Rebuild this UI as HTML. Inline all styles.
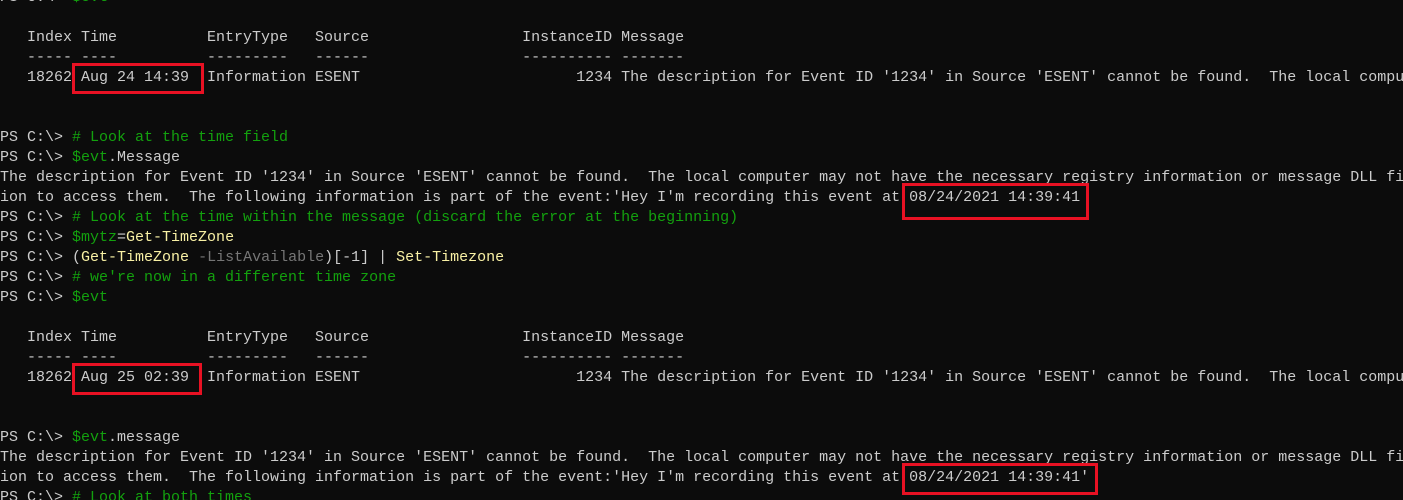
<!DOCTYPE html>
<html><head><style>
html,body{margin:0;padding:0;background:#0c0c0c;width:1403px;height:500px;overflow:hidden;position:relative}
pre{margin:0;position:absolute;left:0;top:-12px;width:1403px;overflow:hidden;font-family:"Liberation Mono",monospace;font-size:15px;line-height:20px;color:#cccccc;white-space:pre}
.g{color:#13a10e}.y{color:#f9f1a5}.d{color:#767676}
.b{position:absolute;border:3px solid #e81123;box-sizing:border-box}
</style></head><body>
<pre>PS C:\&gt; <span class="g">$evt</span>

   Index Time          EntryType   Source                 InstanceID Message
   ----- ----          ---------   ------                 ---------- -------
   18262 Aug 24 14:39  Information ESENT                        1234 The description for Event ID '1234' in Source 'ESENT' cannot be found.  The local compu


PS C:\&gt; <span class="g"># Look at the time field</span>
PS C:\&gt; <span class="g">$evt</span>.Message
The description for Event ID '1234' in Source 'ESENT' cannot be found.  The local computer may not have the necessary registry information or message DLL fi
ion to access them.  The following information is part of the event:'Hey I'm recording this event at 08/24/2021 14:39:41
PS C:\&gt; <span class="g"># Look at the time within the message (discard the error at the beginning)</span>
PS C:\&gt; <span class="g">$mytz</span>=<span class="y">Get-TimeZone</span>
PS C:\&gt; (<span class="y">Get-TimeZone</span> <span class="d">-ListAvailable</span>)[-1] | <span class="y">Set-Timezone</span>
PS C:\&gt; <span class="g"># we're now in a different time zone</span>
PS C:\&gt; <span class="g">$evt</span>

   Index Time          EntryType   Source                 InstanceID Message
   ----- ----          ---------   ------                 ---------- -------
   18262 Aug 25 02:39  Information ESENT                        1234 The description for Event ID '1234' in Source 'ESENT' cannot be found.  The local compu


PS C:\&gt; <span class="g">$evt</span>.message
The description for Event ID '1234' in Source 'ESENT' cannot be found.  The local computer may not have the necessary registry information or message DLL fi
ion to access them.  The following information is part of the event:'Hey I'm recording this event at 08/24/2021 14:39:41'
PS C:\&gt; <span class="g"># Look at both times</span>
</pre>
<div class="b" style="left:72px;top:63px;width:132px;height:31px"></div>
<div class="b" style="left:902px;top:183px;width:187px;height:37px"></div>
<div class="b" style="left:72px;top:363px;width:130px;height:32px"></div>
<div class="b" style="left:902px;top:463px;width:196px;height:32px"></div>
</body></html>
